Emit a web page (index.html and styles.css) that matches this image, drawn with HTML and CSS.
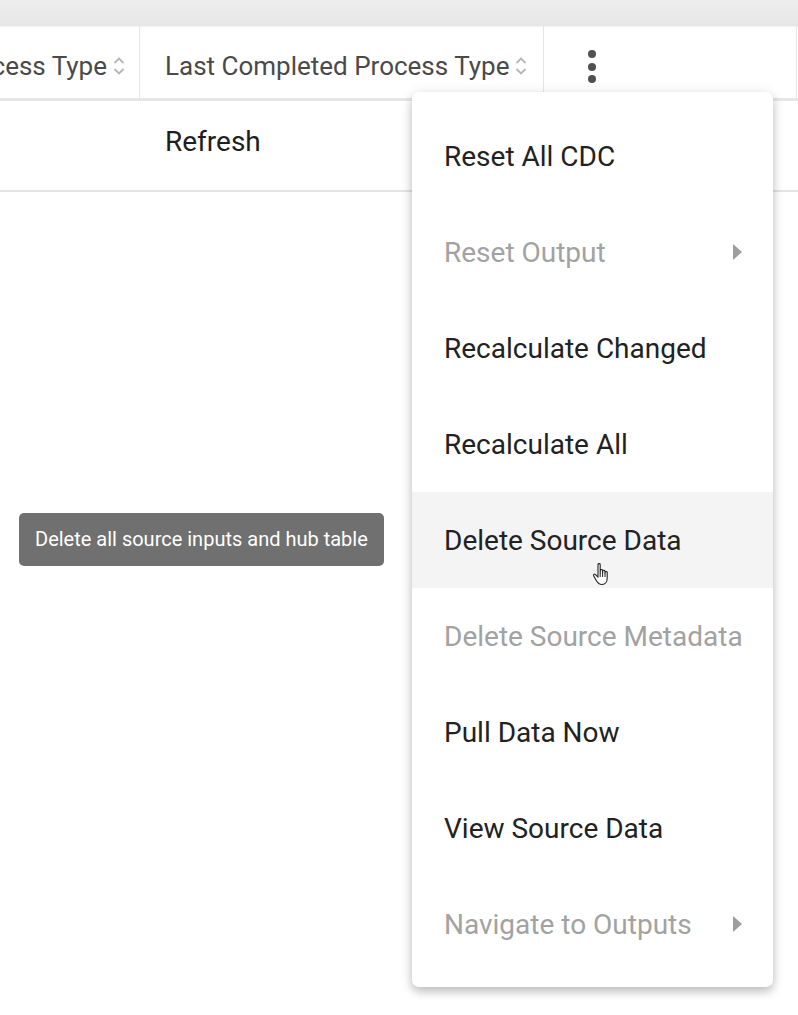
FILE: index.html
```html
<!DOCTYPE html>
<html>
<head>
<meta charset="utf-8">
<link rel="stylesheet" href="styles.css">
</head>
<body>
<div class="topbar"></div>
<div class="table">
  <div class="head">
    <div class="hcell first"><span class="htext">Last Process Type</span><svg class="sort" width="12" height="24" viewBox="0 0 12 24"><path d="M1.5 9 L6 4.5 L10.5 9" fill="none" stroke="#b5b5b5" stroke-width="1.8"/><path d="M1.5 15 L6 19.5 L10.5 15" fill="none" stroke="#b5b5b5" stroke-width="1.8"/></svg></div>
    <div class="hcell second"><span class="htext">Last Completed Process Type</span><svg class="sort" width="12" height="24" viewBox="0 0 12 24"><path d="M1.5 9 L6 4.5 L10.5 9" fill="none" stroke="#b5b5b5" stroke-width="1.8"/><path d="M1.5 15 L6 19.5 L10.5 15" fill="none" stroke="#b5b5b5" stroke-width="1.8"/></svg></div>
    <div class="hcell third"><span class="kebab"><i></i><i></i><i></i></span></div>
  </div>
  <div class="row">
    <div class="rcell first"></div>
    <div class="rcell second">Refresh</div>
    <div class="rcell third"></div>
  </div>
</div>

<div class="tooltip">Delete all source inputs and hub table</div>

<div class="menu">
  <div class="item">Reset All CDC</div>
  <div class="item disabled">Reset Output<span class="arrow"></span></div>
  <div class="item">Recalculate Changed</div>
  <div class="item">Recalculate All</div>
  <div class="item hover">Delete Source Data
    <svg class="cursor" width="20" height="26" viewBox="0 0 20 26"><path d="M6 2.5 C6 1.3 8.2 1.3 8.2 2.5 L8.2 11 L8.4 8.3 C8.4 7.2 10.5 7.2 10.5 8.3 L10.6 11 L10.8 9 C10.8 7.9 12.9 7.9 12.9 9 L13 11.5 L13.2 10.2 C13.2 9.2 15.2 9.2 15.2 10.3 L15.2 16 C15.2 19.5 13.2 22.5 10 22.5 C7 22.5 5.5 20.8 4.3 18.6 L1.6 13.8 C1 12.7 2.6 11.6 3.5 12.6 L6 15.2 Z" fill="#fff" stroke="#222" stroke-width="1.1" stroke-linejoin="round"/><path d="M8.2 11 L8.2 15 M10.6 11 L10.6 15 M13 11.5 L13 15" stroke="#222" stroke-width="1"/></svg>
  </div>
  <div class="item disabled">Delete Source Metadata</div>
  <div class="item">Pull Data Now</div>
  <div class="item">View Source Data</div>
  <div class="item disabled">Navigate to Outputs<span class="arrow"></span></div>
</div>
</body>
</html>
```

FILE: styles.css
```css
html, body {
  margin: 0;
  padding: 0;
  background: #ffffff;
  font-family: Roboto, "Noto Sans", "Liberation Sans", sans-serif;
}

body {
  width: 798px;
  height: 1015px;
  position: relative;
  overflow: hidden;
}

.topbar {
  height: 26px;
  background: linear-gradient(#eeeeee, #e6e6e6);
  box-shadow: 0 1px 2px rgba(0,0,0,0.06);
}

.head {
  display: flex;
  height: 72px;
  border-bottom: 3px solid #e6e6e6;
}

.hcell {
  display: flex;
  align-items: center;
  box-sizing: border-box;
  border-right: 1px solid #e6e6e6;
  font-size: 26px;
  color: #4a4a4a;
  white-space: nowrap;
  overflow: hidden;
  padding-top: 8px;
}

.first {
  width: 140px;
  flex: none;
  justify-content: flex-end;
  padding-right: 14px;
}

.second {
  width: 404px;
  flex: none;
  padding-left: 25px;
}

.third {
  width: 253px;
  flex: none;
  padding-left: 44px;
  padding-top: 9px;
}

.sort {
  margin-left: 6px;
  flex: none;
}

.kebab {
  display: flex;
  flex-direction: column;
  gap: 4.5px;
}

.kebab i {
  display: block;
  width: 8px;
  height: 8px;
  border-radius: 50%;
  background: #505050;
}

.row {
  display: flex;
  height: 89px;
  border-bottom: 2px solid #e4e4e4;
}

.rcell {
  display: flex;
  align-items: center;
  box-sizing: border-box;
  font-size: 28px;
  color: #1e1e1e;
  padding-bottom: 8px;
}

.rcell.first { padding-right: 0; }

.tooltip {
  position: absolute;
  left: 19px;
  top: 513px;
  width: 365px;
  height: 53px;
  box-sizing: border-box;
  background: #707070;
  border-radius: 5px;
  color: #ffffff;
  font-size: 20px;
  display: flex;
  align-items: center;
  padding-left: 16px;
  padding-bottom: 2px;
}

.menu {
  position: absolute;
  left: 412px;
  top: 92px;
  width: 361px;
  height: 895px;
  box-sizing: border-box;
  padding-top: 16px;
  background: #ffffff;
  border-radius: 7px;
  box-shadow: 0 5px 8px rgba(0,0,0,0.18), 0 2px 14px rgba(0,0,0,0.12);
}

.item {
  position: relative;
  height: 96px;
  display: flex;
  align-items: center;
  padding-left: 32px;
  font-size: 28px;
  color: #222222;
}

.item.disabled {
  color: #a2a2a2;
}

.item.hover {
  background: #f4f4f4;
}

.arrow {
  position: absolute;
  left: 321px;
  top: 40px;
  width: 0;
  height: 0;
  border-top: 8px solid transparent;
  border-bottom: 8px solid transparent;
  border-left: 9px solid #9e9e9e;
}

.cursor {
  position: absolute;
  left: 180px;
  top: 70px;
}
```
